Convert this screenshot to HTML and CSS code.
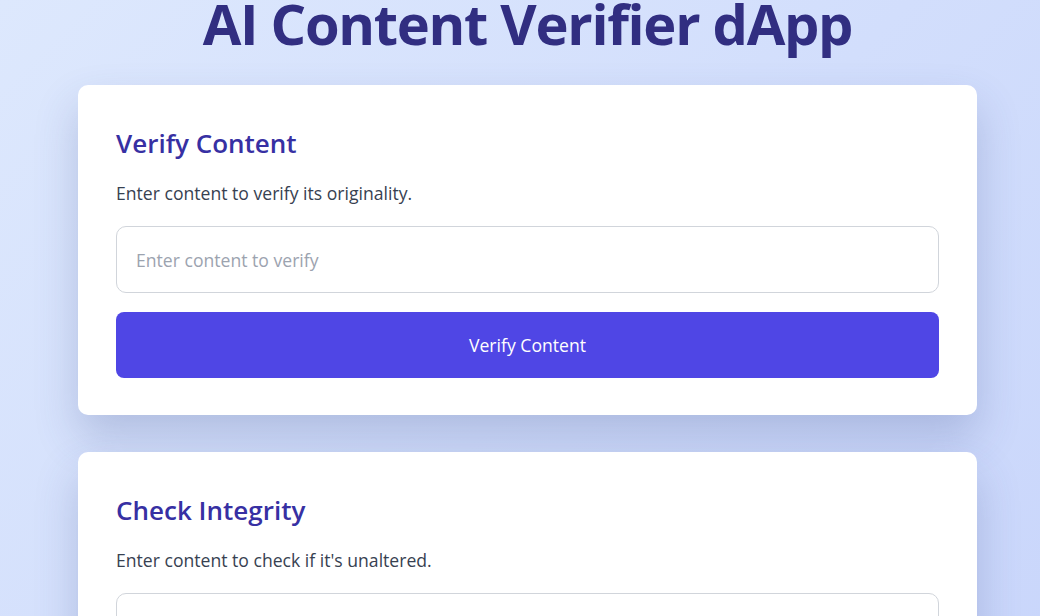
FILE: index.html
```html
<!DOCTYPE html>
<html lang="en">
<head>
<meta charset="utf-8">
<title>AI Content Verifier dApp</title>
<link rel="stylesheet" href="styles.css">
</head>
<body>
<main class="app">
  <h1 class="app-title">AI Content Verifier dApp</h1>
  <section class="card">
    <h2 class="card-title">Verify Content</h2>
    <p class="card-text">Enter content to verify its originality.</p>
    <input class="field" type="text" placeholder="Enter content to verify">
    <button class="btn" type="button">Verify Content</button>
  </section>
  <section class="card">
    <h2 class="card-title">Check Integrity</h2>
    <p class="card-text">Enter content to check if it's unaltered.</p>
    <input class="field" type="text" placeholder="Enter content to check">
    <button class="btn" type="button">Check Integrity</button>
  </section>
</main>
</body>
</html>
```
FILE: styles.css
```css
* { box-sizing: border-box; }
html, body { margin: 0; padding: 0; }
body {
  min-height: 100vh;
  background: linear-gradient(135deg, #dde8fd 0%, #d2defc 50%, #c8d5fb 100%);
  font-family: "Open Sans", "Noto Sans", sans-serif;
  color: #374151;
  overflow: hidden;
}
.app {
  width: 899px;
  margin: 0 0 0 78px;
  padding-top: 2px;
  display: flex;
  flex-direction: column;
  gap: 37px;
}
.app-title {
  margin: 0 0 4px;
  font-size: 56px;
  line-height: 42px;
  letter-spacing: -1.3px;
  font-weight: 700;
  color: #312e81;
  text-align: center;
}
.card {
  background: #fff;
  border-radius: 10px;
  padding: 38px 38px 37px;
  box-shadow: 0 22px 44px rgba(60, 75, 140, 0.24);
  display: flex;
  flex-direction: column;
}
.card-title {
  margin: 0;
  font-size: 26px;
  line-height: 40px;
  font-weight: 600;
  color: #3730a3;
}
.card-text {
  margin: 18px 0 21px;
  font-size: 17.6px;
  line-height: 24px;
  color: #374151;
}
.field {
  height: 67px;
  border: 1px solid #d1d5db;
  border-radius: 10px;
  padding: 0 19px;
  font-family: inherit;
  font-size: 17.6px;
  color: #374151;
  outline: none;
}
.field::placeholder { color: #9ca3af; }
.btn {
  margin-top: 19px;
  height: 66px;
  border: 0;
  border-radius: 8px;
  background: #4f46e5;
  color: #fff;
  font-family: inherit;
  font-size: 17.6px;
  cursor: pointer;
}
```
